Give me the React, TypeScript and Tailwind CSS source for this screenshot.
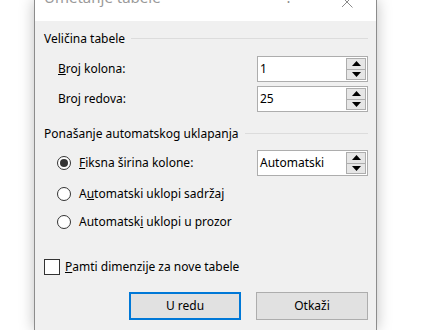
const font = { fontFamily: '"Noto Sans", "Open Sans", sans-serif' }

function Spinner() {
  return (
    <div className="flex flex-col gap-0 w-[20px] h-[22px] mr-[1px]">
      <div className="flex-1 flex items-center justify-center bg-[#e6e6e6] border border-[#adadad]">
        <svg width="9" height="5" viewBox="0 0 9 5"><path d="M4.5 0 L9 5 L0 5 Z" fill="#000" /></svg>
      </div>
      <div className="flex-1 flex items-center justify-center bg-[#e6e6e6] border border-t-0 border-[#adadad]">
        <svg width="9" height="5" viewBox="0 0 9 5"><path d="M0 0 L9 0 L4.5 5 Z" fill="#000" /></svg>
      </div>
    </div>
  )
}

function SpinBox({ value }: { value: string }) {
  return (
    <div className="w-[111px] h-[26px] bg-white border border-[#adadad] flex items-center justify-between">
      <span className="pl-[2px]">{value}</span>
      <Spinner />
    </div>
  )
}

function GroupTitle({ text }: { text: string }) {
  return (
    <div className="flex items-center h-[17px] gap-[6px]">
      <span>{text}</span>
      <div className="flex-1 h-px bg-[#dcdcdc]" />
    </div>
  )
}

function Radio({ checked }: { checked?: boolean }) {
  return (
    <div className="w-[14px] h-[14px] rounded-full border border-[#333] bg-white flex items-center justify-center">
      {checked && <div className="w-[8px] h-[8px] rounded-full bg-[#333]" />}
    </div>
  )
}

export default function App() {
  return (
    <div className="w-[436px] h-[330px] bg-white overflow-hidden text-[12px] text-black" style={font}>
      <div className="ml-[34px] w-[343px] h-[330px] border-x border-[#8c8c8c] shadow-[0_0_14px_rgba(0,0,0,0.25)] flex flex-col">
        {/* title bar */}
        <div className="h-[21px] bg-white flex items-start overflow-hidden">
          <span className="ml-[9px] -mt-[13px] text-[15px] leading-[20px] text-[#9a9a9a]">Umetanje tabele</span>
          <span className="ml-auto -mt-[12px] text-[14px] leading-[20px] text-[#8a8a8a]">?</span>
          <svg className="ml-[50px] mr-[23px]" width="11" height="8" viewBox="0 0 11 8">
            <path d="M-0.5 -3.5 L10.5 7.5 M10.5 -3.5 L-0.5 7.5" stroke="#8a8a8a" strokeWidth="1" />
          </svg>
        </div>

        {/* body */}
        <div className="flex-1 bg-[#f0f0f0] pl-[9px] pr-[8px] pt-[9px] flex flex-col">
          <GroupTitle text="Veličina tabele" />

          <div className="mt-[9px] flex items-center justify-between pl-[14px]">
            <span><span className="underline">B</span>roj kolona:</span>
            <SpinBox value="1" />
          </div>
          <div className="mt-[4px] flex items-center justify-between pl-[14px]">
            <span>Bro<span className="underline">j</span> redova:</span>
            <SpinBox value="25" />
          </div>

          <div className="mt-[13px]">
            <GroupTitle text="Ponašanje automatskog uklapanja" />
          </div>

          <div className="mt-[8px] flex items-center justify-between pl-[13px]">
            <div className="flex items-center gap-[8px]">
              <Radio checked />
              <span><span className="underline">F</span>iksna širina kolone:</span>
            </div>
            <SpinBox value="Automatski" />
          </div>
          <div className="mt-[9px] flex items-center gap-[8px] pl-[13px] h-[17px]">
            <Radio />
            <span>A<span className="underline">u</span>tomatski uklopi sadržaj</span>
          </div>
          <div className="mt-[11px] flex items-center gap-[8px] pl-[13px] h-[17px]">
            <Radio />
            <span>Automatsk<span className="underline">i</span> uklopi u prozor</span>
          </div>

          <div className="mt-[28px] flex items-center gap-[5px] h-[17px]">
            <div className="w-[16px] h-[16px] border border-[#333] bg-white" />
            <span><span className="underline">P</span>amti dimenzije za nove tabele</span>
          </div>

          <div className="mt-[17px] flex justify-end gap-[15px]">
            <button className="w-[112px] h-[28px] bg-[#e1e1e1] border-2 border-[#0078d7]">U redu</button>
            <button className="w-[112px] h-[28px] bg-[#e1e1e1] border border-[#adadad]">Otkaži</button>
          </div>
        </div>
      </div>
    </div>
  )
}
